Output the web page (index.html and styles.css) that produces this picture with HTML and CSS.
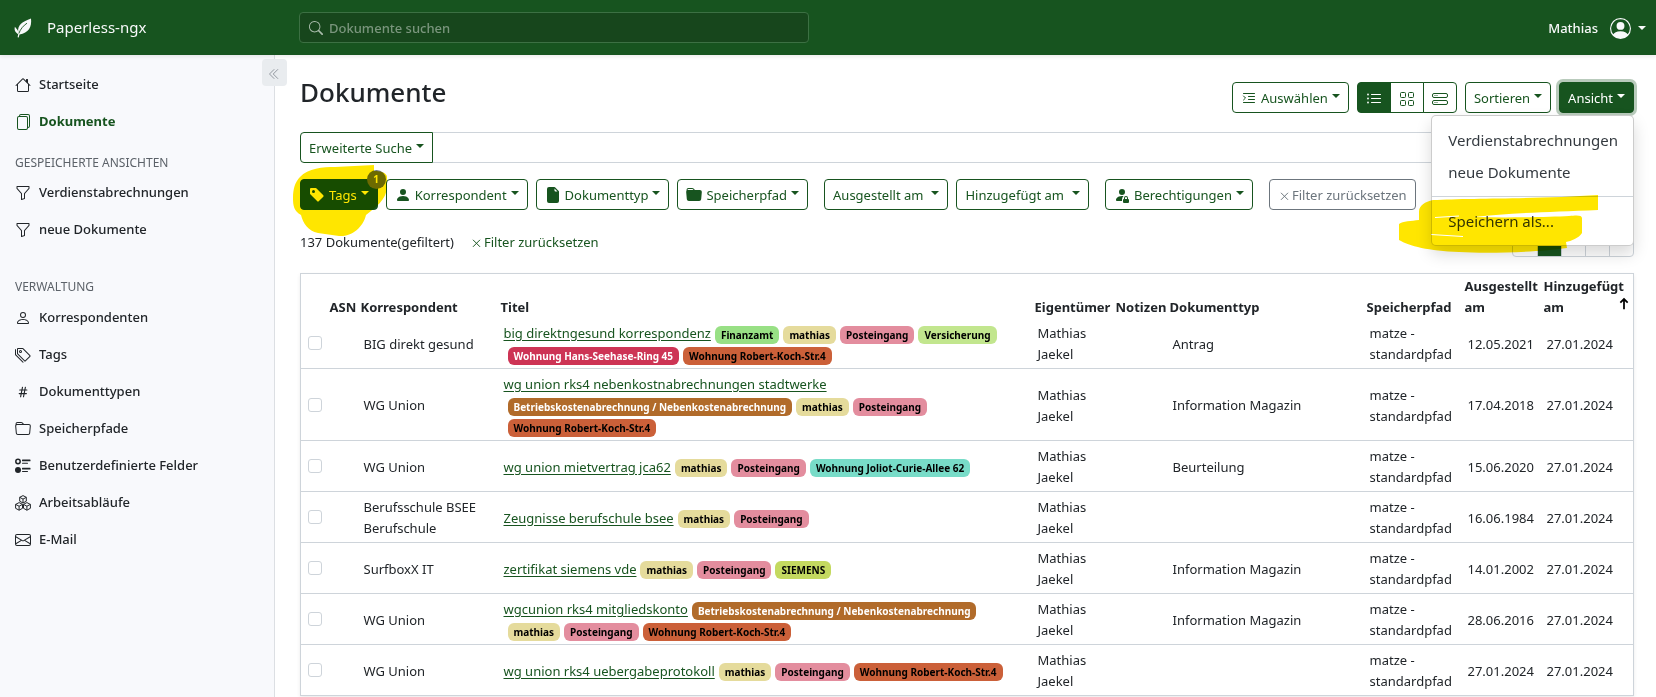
FILE: index.html
```html
<!DOCTYPE html>
<html lang="de">
<head>
<meta charset="utf-8">
<title>Dokumente - Paperless-ngx</title>
<link rel="stylesheet" href="styles.css">
</head>
<body>
<svg class="sprite" aria-hidden="true">
  <symbol id="i-house" viewBox="0 0 16 16"><path d="M8.707 1.5a1 1 0 0 0-1.414 0L.646 8.146a.5.5 0 0 0 .708.708L2 8.207V13.5A1.5 1.5 0 0 0 3.5 15h9a1.5 1.5 0 0 0 1.5-1.5V8.207l.646.647a.5.5 0 0 0 .708-.708L13 5.793V2.5a.5.5 0 0 0-.5-.5h-1a.5.5 0 0 0-.5.5v1.293zM13 7.207V13.5a.5.5 0 0 1-.5.5h-9a.5.5 0 0 1-.5-.5V7.207l5-5z"/></symbol>
  <symbol id="i-files" viewBox="0 0 16 16"><path d="M13 0H6a2 2 0 0 0-2 2 2 2 0 0 0-2 2v10a2 2 0 0 0 2 2h7a2 2 0 0 0 2-2 2 2 0 0 0 2-2V2a2 2 0 0 0-2-2m0 13V4a2 2 0 0 0-2-2H5a1 1 0 0 1 1-1h7a1 1 0 0 1 1 1v10a1 1 0 0 1-1 1M3 4a1 1 0 0 1 1-1h7a1 1 0 0 1 1 1v10a1 1 0 0 1-1 1H4a1 1 0 0 1-1-1z"/></symbol>
  <symbol id="i-funnel" viewBox="0 0 16 16"><path d="M1.5 1.5A.5.5 0 0 1 2 1h12a.5.5 0 0 1 .5.5v2a.5.5 0 0 1-.128.334L10 8.692V13.5a.5.5 0 0 1-.342.474l-3 1A.5.5 0 0 1 6 14.5V8.692L1.628 3.834A.5.5 0 0 1 1.5 3.5zm1 .5v1.308l4.372 4.858A.5.5 0 0 1 7 8.5v5.306l2-.666V8.5a.5.5 0 0 1 .128-.334L13.5 3.308V2z"/></symbol>
  <symbol id="i-person" viewBox="0 0 16 16"><path d="M8 8a3 3 0 1 0 0-6 3 3 0 0 0 0 6m2-3a2 2 0 1 1-4 0 2 2 0 0 1 4 0m4 8c0 1-1 1-1 1H3s-1 0-1-1 1-4 6-4 6 3 6 4m-1-.004c-.001-.246-.154-.986-.832-1.664C11.516 10.68 10.289 10 8 10s-3.516.68-4.168 1.332c-.678.678-.83 1.418-.832 1.664z"/></symbol>
  <symbol id="i-tags" viewBox="0 0 16 16"><path d="M3 2v4.586l7 7L14.586 9l-7-7zM2 2a1 1 0 0 1 1-1h4.586a1 1 0 0 1 .707.293l7 7a1 1 0 0 1 0 1.414l-4.586 4.586a1 1 0 0 1-1.414 0l-7-7A1 1 0 0 1 2 6.586z"/><path d="M5.5 5a.5.5 0 1 1 0-1 .5.5 0 0 1 0 1m0 1a1.5 1.5 0 1 0 0-3 1.5 1.5 0 0 0 0 3M1 7.086a1 1 0 0 0 .293.707L8.75 15.25l-.043.043a1 1 0 0 1-1.414 0l-7-7A1 1 0 0 1 0 7.586V3a1 1 0 0 1 1-1z"/></symbol>
  <symbol id="i-hash" viewBox="0 0 16 16"><path d="M7.5 3.2 5.6 12.8M10.4 3.2 8.5 12.8M4.7 6h7.2M4.2 9.6h7.2" fill="none" stroke="currentColor" stroke-width="1.1" stroke-linecap="round"/></symbol>
  <symbol id="i-folder" viewBox="0 0 16 16"><path d="M.54 3.87.5 3a2 2 0 0 1 2-2h3.672a2 2 0 0 1 1.414.586l.828.828A2 2 0 0 0 9.828 3h3.982a2 2 0 0 1 1.992 2.181l-.637 7A2 2 0 0 1 13.174 14H2.826a2 2 0 0 1-1.991-1.819l-.637-7a2 2 0 0 1 .342-1.31zM2.19 4a1 1 0 0 0-.996 1.09l.637 7a1 1 0 0 0 .995.91h10.348a1 1 0 0 0 .995-.91l.637-7A1 1 0 0 0 13.81 4zm4.69-1.707A1 1 0 0 0 6.172 2H2.5a1 1 0 0 0-1 .981l.006.139q.323-.119.684-.12h5.396z"/></symbol>
  <symbol id="i-radios" viewBox="0 0 16 16"><circle cx="3" cy="3.5" r="2.2" fill="none" stroke="currentColor" stroke-width="1.5"/><circle cx="3" cy="12" r="3"/><rect x="7" y="1.5" width="8.5" height="1.8" rx=".5"/><rect x="7" y="4.8" width="6" height="1" rx=".5"/><rect x="7" y="9.8" width="8.5" height="1.8" rx=".5"/><rect x="7" y="13" width="6" height="1" rx=".5"/></symbol>
  <symbol id="i-boxes" viewBox="0 0 16 16"><path d="M8 .6 11.3 2.3V6.2L8 8 4.7 6.2V2.3zM4.7 2.3 8 4.1l3.3-1.8M8 4.1V8M4.1 7.6l3.4 1.8v3.9l-3.4 1.9-3.5-1.9V9.4zM.6 9.4l3.5 1.8 3.4-1.8M4.1 11.2v4M11.9 7.6l3.5 1.8v3.9l-3.5 1.9-3.4-1.9V9.4zM8.5 9.4l3.4 1.8 3.5-1.8M11.9 11.2v4" fill="none" stroke="currentColor" stroke-width="1" stroke-linejoin="round"/></symbol>
  <symbol id="i-envelope" viewBox="0 0 16 16"><path d="M0 4a2 2 0 0 1 2-2h12a2 2 0 0 1 2 2v8a2 2 0 0 1-2 2H2a2 2 0 0 1-2-2zm2-1a1 1 0 0 0-1 1v.217l7 4.2 7-4.2V4a1 1 0 0 0-1-1zm13 2.383-4.708 2.825L15 11.105zm-.034 6.876-5.64-3.471L8 9.583l-1.326-.795-5.64 3.47A1 1 0 0 0 2 13h12a1 1 0 0 0 .966-.741M1 11.105l4.708-2.897L1 5.383z"/></symbol>
  <symbol id="i-collapse" viewBox="0 0 16 16"><path d="M8 2 2 8l6 6M13 2 7 8l6 6" fill="none" stroke="currentColor" stroke-width="1.2" stroke-linecap="round" stroke-linejoin="round"/></symbol>
  <symbol id="i-search" viewBox="0 0 16 16"><path d="M11.742 10.344a6.5 6.5 0 1 0-1.397 1.398h-.001q.044.06.098.115l3.85 3.85a1 1 0 0 0 1.415-1.414l-3.85-3.85a1 1 0 0 0-.115-.1zM12 6.5a5.5 5.5 0 1 1-11 0 5.5 5.5 0 0 1 11 0"/></symbol>
  <symbol id="i-tag-fill" viewBox="0 0 16 16"><path d="M2 1a1 1 0 0 0-1 1v4.586a1 1 0 0 0 .293.707l7 7a1 1 0 0 0 1.414 0l4.586-4.586a1 1 0 0 0 0-1.414l-7-7A1 1 0 0 0 6.586 1zm4 3.5a1.5 1.5 0 1 1-3 0 1.5 1.5 0 0 1 3 0"/></symbol>
  <symbol id="i-person-fill" viewBox="0 0 16 16"><path d="M3 14s-1 0-1-1 1-4 6-4 6 3 6 4-1 1-1 1zm5-6a3 3 0 1 0 0-6 3 3 0 0 0 0 6"/></symbol>
  <symbol id="i-file-fill" viewBox="0 0 16 16"><path d="M4 0h5.293A1 1 0 0 1 10 .293L13.707 4a1 1 0 0 1 .293.707V14a2 2 0 0 1-2 2H4a2 2 0 0 1-2-2V2a2 2 0 0 1 2-2m5.5 1.5v2a1 1 0 0 0 1 1h2z"/></symbol>
  <symbol id="i-folder-fill" viewBox="0 0 16 16"><path d="M9.828 3h3.982a2 2 0 0 1 1.992 2.181l-.637 7A2 2 0 0 1 13.174 14H2.825a2 2 0 0 1-1.991-1.819l-.637-7a2 2 0 0 1 .342-1.31L.5 3a2 2 0 0 1 2-2h3.672a2 2 0 0 1 1.414.586l.828.828A2 2 0 0 0 9.828 3m-8.322.12q.322-.119.684-.12h5.396l-.707-.707A1 1 0 0 0 6.172 2H2.5a1 1 0 0 0-1 .981z"/></symbol>
  <symbol id="i-person-lock" viewBox="0 0 16 16"><path d="M11 5a3 3 0 1 1-6 0 3 3 0 0 1 6 0m-9 8c0 1 1 1 1 1h5v-1a2 2 0 0 1 .01-.2 4.49 4.49 0 0 1 1.534-3.693Q8.844 9.002 8 9c-5 0-6 3-6 4m7 0a1 1 0 0 1 1-1v-1a2 2 0 1 1 4 0v1a1 1 0 0 1 1 1v2a1 1 0 0 1-1 1h-4a1 1 0 0 1-1-1zm3-3a1 1 0 0 0-1 1v1h2v-1a1 1 0 0 0-1-1"/></symbol>
  <symbol id="i-indent" viewBox="0 0 16 16"><path d="M2.5 3.5h11M7.5 6.5h6M7.5 9.5h6M2.5 12.5h11M2.5 6 4.500 8l-2 2" fill="none" stroke="currentColor" stroke-width="1" stroke-linecap="round" stroke-linejoin="round"/></symbol>
  <symbol id="i-list" viewBox="0 0 16 16"><path d="M5.500 3.500h9M5.500 7.500h9M5.500 11.500h9" fill="none" stroke="currentColor" stroke-width="1" stroke-linecap="round"/><circle cx="2" cy="3.500" r=".9"/><circle cx="2" cy="7.500" r=".9"/><circle cx="2" cy="11.500" r=".9"/></symbol>
  <symbol id="i-grid" viewBox="0 0 16 16"><path d="M1.500 2.500a1 1 0 0 1 1-1h3a1 1 0 0 1 1 1v3a1 1 0 0 1-1 1h-3a1 1 0 0 1-1-1zm8 0a1 1 0 0 1 1-1h3a1 1 0 0 1 1 1v3a1 1 0 0 1-1 1h-3a1 1 0 0 1-1-1zm-8 8a1 1 0 0 1 1-1h3a1 1 0 0 1 1 1v3a1 1 0 0 1-1 1h-3a1 1 0 0 1-1-1zm8 0a1 1 0 0 1 1-1h3a1 1 0 0 1 1 1v3a1 1 0 0 1-1 1h-3a1 1 0 0 1-1-1z" fill="none" stroke="currentColor" stroke-width="1"/></symbol>
  <symbol id="i-stack" viewBox="0 0 16 16"><rect x=".5" y="2.500" width="15" height="4" rx="1.500" fill="none" stroke="currentColor"/><rect x=".5" y="9.500" width="15" height="4" rx="1.500" fill="none" stroke="currentColor"/><circle cx="3" cy="4.500" r=".6"/><circle cx="5" cy="4.500" r=".6"/><circle cx="3" cy="11.500" r=".6"/><circle cx="5" cy="11.500" r=".6"/></symbol>
  <symbol id="i-user" viewBox="0 0 16 16"><path d="M11 6a3 3 0 1 1-6 0 3 3 0 0 1 6 0"/><path fill-rule="evenodd" d="M0 8a8 8 0 1 1 16 0A8 8 0 0 1 0 8m8-7a7 7 0 0 0-5.468 11.370C3.242 11.226 4.805 10 8 10s4.757 1.225 5.468 2.370A7 7 0 0 0 8 1"/></symbol>
  <symbol id="i-x" viewBox="0 0 16 16"><path d="m4 5 8 8M12 5l-8 8" fill="none" stroke="currentColor" stroke-width="1.200" stroke-linecap="round"/></symbol>
  <symbol id="i-up" viewBox="0 0 16 16"><path d="M8 14V2.500M3.800 6.500 8 2.300l4.200 4.200" fill="none" stroke="#000" stroke-width="2"/></symbol>
  <symbol id="i-leaf" viewBox="0 0 18 20"><path d="M17 .5C18 9 14.500 15 5.500 16.500L4.700 19.500 3.600 19.200 4.200 16.200C1.500 14.500 0 12.500.9 8.800 2.500 11 4.200 12 4.300 14.500 3.200 6.500 8.500 4 17 .5z"/><path d="M4.800 15.500C6.500 11 9.500 7.500 13 5.200" fill="none" stroke="#17541f" stroke-width=".9"/></symbol>
</svg>

<header class="topbar">
  <a class="brand" href="#"><svg class="leaf"><use href="#i-leaf"/></svg>Paperless-ngx</a>
  <form class="search">
    <svg class="icon"><use href="#i-search"/></svg>
    <input type="search" placeholder="Dokumente suchen" aria-label="Dokumente suchen">
  </form>
  <button class="user" type="button">Mathias<svg class="avatar"><use href="#i-user"/></svg><span class="caret"></span></button>
</header>

<div class="shell">
  <nav class="sidebar">
    <button class="collapse" type="button" aria-label="Seitenleiste einklappen"><svg class="icon"><use href="#i-collapse"/></svg></button>
    <a class="nav-link" href="#"><svg class="icon"><use href="#i-house"/></svg>Startseite</a>
    <a class="nav-link active" href="#"><svg class="icon"><use href="#i-files"/></svg>Dokumente</a>
    <h6 class="nav-head">Gespeicherte Ansichten</h6>
    <a class="nav-link" href="#"><svg class="icon"><use href="#i-funnel"/></svg>Verdienstabrechnungen</a>
    <a class="nav-link" href="#"><svg class="icon"><use href="#i-funnel"/></svg>neue Dokumente</a>
    <h6 class="nav-head nav-head-spaced">Verwaltung</h6>
    <a class="nav-link" href="#"><svg class="icon"><use href="#i-person"/></svg>Korrespondenten</a>
    <a class="nav-link" href="#"><svg class="icon"><use href="#i-tags"/></svg>Tags</a>
    <a class="nav-link" href="#"><svg class="icon"><use href="#i-hash"/></svg>Dokumenttypen</a>
    <a class="nav-link" href="#"><svg class="icon"><use href="#i-folder"/></svg>Speicherpfade</a>
    <a class="nav-link" href="#"><svg class="icon"><use href="#i-radios"/></svg>Benutzerdefinierte Felder</a>
    <a class="nav-link" href="#"><svg class="icon"><use href="#i-boxes"/></svg>Arbeitsabläufe</a>
    <a class="nav-link" href="#"><svg class="icon"><use href="#i-envelope"/></svg>E-Mail</a>
  </nav>

  <main class="main">
    <div class="page-head">
      <h1>Dokumente</h1>
      <div class="toolbar">
        <button class="btn" type="button"><svg class="icon"><use href="#i-indent"/></svg>Auswählen<span class="caret"></span></button>
        <div class="btn-group">
          <button class="btn solid" type="button" aria-label="Liste"><svg class="icon"><use href="#i-list"/></svg></button>
          <button class="btn" type="button" aria-label="Kacheln"><svg class="icon"><use href="#i-grid"/></svg></button>
          <button class="btn" type="button" aria-label="Details"><svg class="icon"><use href="#i-stack"/></svg></button>
        </div>
        <button class="btn" type="button">Sortieren<span class="caret"></span></button>
        <div class="dropdown">
          <button class="btn solid focus" type="button">Ansicht<span class="caret"></span></button>
          <div class="menu">
            <button type="button">Verdienstabrechnungen</button>
            <button type="button">neue Dokumente</button>
            <hr>
            <button type="button">Speichern als...</button>
          </div>
          <svg class="marker marker-menu" viewBox="0 0 200 60" aria-hidden="true"><path d="M20 25V17C20 10 26 7 34 5 70 3 140 4 199 0V15C150 17 110 18 75 22 110 23 150 22 170 21 178 20 183 20 183 23V38C180 43 172 46 167 47L168 53C140 57 90 59 60 57 30 56 10 51 0 45V29C4 26 12 26 20 25z"/><path class="streak" d="M32 39.500 64 41.500M36 22.500 60 21"/></svg>
        </div>
      </div>
    </div>

    <div class="query">
      <button class="btn" type="button">Erweiterte Suche<span class="caret"></span></button>
      <input type="text" aria-label="Erweiterte Suche">
    </div>

    <div class="filters">
      <div class="dropdown">
        <button class="btn solid" type="button"><svg class="icon"><use href="#i-tag-fill"/></svg>Tags<span class="caret"></span></button>
        <span class="count">1</span>
        <svg class="marker marker-tags" viewBox="0 0 96 72" aria-hidden="true"><path d="M7 12C15 3 30 2 42 2L81 0V6C88 6 94 8 94 12V22C94 34 82 43 73 50 70 63 58 72 46 71L25 68C15 66 10 58 8 50 1 46 0 41 0 33 0 24 2 17 7 12z"/></svg>
      </div>
      <button class="btn" type="button"><svg class="icon"><use href="#i-person-fill"/></svg>Korrespondent<span class="caret"></span></button>
      <button class="btn" type="button"><svg class="icon"><use href="#i-file-fill"/></svg>Dokumenttyp<span class="caret"></span></button>
      <button class="btn" type="button"><svg class="icon"><use href="#i-folder-fill"/></svg>Speicherpfad<span class="caret"></span></button>
      <button class="btn group-start wide" type="button">Ausgestellt am<span class="caret"></span></button>
      <button class="btn wide" type="button">Hinzugefügt am<span class="caret"></span></button>
      <button class="btn group-start" type="button"><svg class="icon"><use href="#i-person-lock"/></svg>Berechtigungen<span class="caret"></span></button>
      <button class="btn muted group-start" type="button"><svg class="icon-x"><use href="#i-x"/></svg>Filter zurücksetzen</button>
    </div>

    <div class="summary">
      <span>137 Dokumente(gefiltert)</span>
      <button class="link" type="button"><svg class="icon-x"><use href="#i-x"/></svg>Filter zurücksetzen</button>
      <nav class="pages" aria-label="Seiten"><a href="#">«</a><a class="current" href="#">1</a><a href="#">2</a><a href="#">3</a><a href="#">»</a></nav>
    </div>

    <table class="docs">
      <colgroup><col class="c-check"><col class="c-asn"><col class="c-corr"><col><col class="c-owner"><col class="c-notes"><col class="c-type"><col class="c-path"><col class="c-issued"><col class="c-added"></colgroup>
      <thead><tr><th></th><th>ASN</th><th>Korrespondent</th><th>Titel</th><th>Eigentümer</th><th>Notizen</th><th>Dokumenttyp</th><th>Speicherpfad</th><th>Ausgestellt<br>am</th><th>Hinzugefügt<span class="sorted">am<svg class="sort"><use href="#i-up"/></svg></span></th></tr></thead>
      <tbody>
        <tr><td><input type="checkbox" aria-label="big direktngesund korrespondenz"></td><td></td><td>BIG direkt gesund</td><td><a href="#">big direktngesund korrespondenz</a><span class="tag t-fin">Finanzamt</span><wbr><span class="tag t-mat">mathias</span><wbr><span class="tag t-post">Posteingang</span><wbr><span class="tag t-vers">Versicherung</span><wbr><span class="tag t-hans">Wohnung Hans-Seehase-Ring 45</span><wbr><span class="tag t-koch">Wohnung Robert-Koch-Str.4</span></td><td>Mathias Jaekel</td><td></td><td>Antrag</td><td>matze - standardpfad</td><td>12.05.2021</td><td>27.01.2024</td></tr>
        <tr><td><input type="checkbox" aria-label="wg union rks4 nebenkostnabrechnungen stadtwerke"></td><td></td><td>WG Union</td><td><a href="#">wg union rks4 nebenkostnabrechnungen stadtwerke</a><wbr><span class="tag t-betr">Betriebskostenabrechnung / Nebenkostenabrechnung</span><wbr><span class="tag t-mat">mathias</span><wbr><span class="tag t-post">Posteingang</span><wbr><span class="tag t-koch">Wohnung Robert-Koch-Str.4</span></td><td>Mathias Jaekel</td><td></td><td>Information Magazin</td><td>matze - standardpfad</td><td>17.04.2018</td><td>27.01.2024</td></tr>
        <tr><td><input type="checkbox" aria-label="wg union mietvertrag jca62"></td><td></td><td>WG Union</td><td><a href="#">wg union mietvertrag jca62</a><span class="tag t-mat">mathias</span><span class="tag t-post">Posteingang</span><span class="tag t-jol">Wohnung Joliot-Curie-Allee 62</span></td><td>Mathias Jaekel</td><td></td><td>Beurteilung</td><td>matze - standardpfad</td><td>15.06.2020</td><td>27.01.2024</td></tr>
        <tr><td><input type="checkbox" aria-label="Zeugnisse berufschule bsee"></td><td></td><td>Berufsschule BSEE Berufschule</td><td><a href="#">Zeugnisse berufschule bsee</a><span class="tag t-mat">mathias</span><span class="tag t-post">Posteingang</span></td><td>Mathias Jaekel</td><td></td><td></td><td>matze - standardpfad</td><td>16.06.1984</td><td>27.01.2024</td></tr>
        <tr><td><input type="checkbox" aria-label="zertifikat siemens vde"></td><td></td><td>SurfboxX IT</td><td><a href="#">zertifikat siemens vde</a><span class="tag t-mat">mathias</span><span class="tag t-post">Posteingang</span><span class="tag t-siem">SIEMENS</span></td><td>Mathias Jaekel</td><td></td><td>Information Magazin</td><td>matze - standardpfad</td><td>14.01.2002</td><td>27.01.2024</td></tr>
        <tr><td><input type="checkbox" aria-label="wgcunion rks4 mitgliedskonto"></td><td></td><td>WG Union</td><td><a href="#">wgcunion rks4 mitgliedskonto</a><span class="tag t-betr">Betriebskostenabrechnung / Nebenkostenabrechnung</span><wbr><span class="tag t-mat">mathias</span><wbr><span class="tag t-post">Posteingang</span><wbr><span class="tag t-koch">Wohnung Robert-Koch-Str.4</span></td><td>Mathias Jaekel</td><td></td><td>Information Magazin</td><td>matze - standardpfad</td><td>28.06.2016</td><td>27.01.2024</td></tr>
        <tr><td><input type="checkbox" aria-label="wg union rks4 uebergabeprotokoll"></td><td></td><td>WG Union</td><td><a href="#">wg union rks4 uebergabeprotokoll</a><span class="tag t-mat">mathias</span><span class="tag t-post">Posteingang</span><span class="tag t-koch">Wohnung Robert-Koch-Str.4</span></td><td>Mathias Jaekel</td><td></td><td></td><td>matze - standardpfad</td><td>27.01.2024</td><td>27.01.2024</td></tr>
      </tbody>
    </table>
  </main>
</div>
</body>
</html>
```
FILE: styles.css
```css
:root {
  --green: #17541f;
  --line: #ced4da;
  --text: #212529;
}
* { box-sizing: border-box; }
body {
  margin: 0;
  min-height: 100vh;
  display: flex;
  flex-direction: column;
  background: #fff;
  color: var(--text);
  font: 13px/21px "Noto Sans", "Open Sans", sans-serif;
}
button, input { font: inherit; color: inherit; }
button { cursor: pointer; }
a { color: inherit; text-decoration: none; }
svg { fill: currentColor; flex: none; }
.sprite { display: none; }
.icon { width: 16px; height: 16px; }
.caret {
  width: 0;
  height: 0;
  margin-bottom: 4px;
  border: 4px solid transparent;
  border-top-color: currentColor;
  border-bottom: 0;
}

/* Header */
.topbar {
  display: flex;
  align-items: center;
  height: 55px;
  padding-right: 10px;
  background: var(--green);
  color: #f8f9fa;
  box-shadow: 0 2px 4px rgba(0, 0, 0, .08);
  position: relative;
  z-index: 3;
}
.brand {
  display: flex;
  align-items: center;
  gap: 15px;
  width: 299px;
  padding-left: 14px;
  font-size: 15px;
}
.leaf { width: 18px; height: 20px; }
.search {
  display: flex;
  align-items: center;
  gap: 6px;
  width: 510px;
  height: 31px;
  padding: 0 9px;
  border: 1px solid #3c7043;
  border-radius: 4px;
  background: #17461c;
}
.search .icon { width: 14px; height: 14px; color: #a9bcab; }
.search input {
  flex: 1;
  min-width: 0;
  padding: 1px 0 0;
  border: 0;
  outline: 0;
  background: none;
}
.search input::placeholder { color: #7a957d; opacity: 1; font-weight: 500; }
.user {
  display: flex;
  align-items: center;
  margin-left: auto;
  padding: 1px 0 0;
  border: 0;
  background: none;
  font-weight: 500;
}
.avatar { width: 21px; height: 21px; margin: 0 7px 0 12px; }
.user .caret { margin-bottom: 0; }

/* Sidebar */
.shell { display: flex; flex: 1; }
.sidebar {
  position: relative;
  flex: none;
  width: 275px;
  padding-top: 11px;
  border-right: 1px solid #dcdfe3;
  background: #f8f9fc;
}
.collapse {
  position: absolute;
  top: 4px;
  right: -13px;
  display: grid;
  place-items: center;
  width: 25px;
  height: 27px;
  padding: 3px 2px 0 0;
  border: 0;
  border-radius: 4px;
  background: #e9ecef;
  color: #8a9097;
}
.collapse .icon { width: 12px; height: 12px; }
.nav-link {
  display: flex;
  align-items: center;
  gap: 8px;
  height: 37px;
  padding-left: 15px;
  font-weight: 500;
}
.nav-link.active { color: var(--green); font-weight: 700; }
.nav-head {
  margin: 0;
  padding: 13px 15px 1px;
  color: #5c6269;
  font-size: 12px;
  font-weight: 400;
  line-height: 20px;
  text-transform: uppercase;
}
.nav-head-spaced { padding-top: 29px; padding-bottom: 2px; }

/* Main area */
.main { flex: 1; min-width: 0; padding: 20px 22px 0 25px; }
.page-head {
  display: flex;
  justify-content: space-between;
  height: 57px;
}
h1 { margin: 0; font-size: 26px; font-weight: 500; line-height: 34px; }
.toolbar { display: flex; gap: 8px; padding-top: 7px; }
.btn {
  display: flex;
  align-items: center;
  justify-content: center;
  gap: 4px;
  height: 31px;
  padding: 1px 8px 0;
  border: 1px solid var(--green);
  border-radius: 4px;
  background: #fff;
  color: var(--green);
  white-space: nowrap;
}
.btn.solid { background: var(--green); color: #fff; }
.btn.focus { box-shadow: 0 0 0 3px #b9cbbc; }
.btn.muted { border-color: #6c757d; color: #6c757d; gap: 1px; }
.btn.wide { gap: 8px; }
.btn-group { display: flex; }
.btn-group .btn { width: 34px; margin-right: -1px; padding-top: 3px; border-radius: 0; }
.btn-group .btn:first-child { border-radius: 4px 0 0 4px; }
.btn-group .btn:last-child { margin-right: 0; border-radius: 0 4px 4px 0; }
.icon-x { width: 13px; height: 13px; }

.dropdown { position: relative; }
.menu {
  position: absolute;
  top: 33px;
  right: 0;
  z-index: 5;
  display: flex;
  flex-direction: column;
  padding: 8px 0;
  border: 1px solid rgba(0, 0, 0, .2);
  border-radius: 5px;
  background: #fff;
  box-shadow: 0 8px 16px rgba(0, 0, 0, .15);
}
.menu button {
  padding: 4px 15px 4px 16px;
  border: 0;
  background: none;
  color: #343a40;
  font-size: 15px;
  line-height: 24px;
  text-align: left;
  white-space: nowrap;
}
.menu hr { width: 100%; margin: 8px 0; border: 0; border-top: 1px solid var(--line); }

/* Highlighter strokes laid over the controls */
.marker {
  position: absolute;
  z-index: 6;
  fill: #ffe600;
  mix-blend-mode: multiply;
  pointer-events: none;
}
.marker-tags { top: -14px; left: -7px; width: 96px; height: 72px; }
.marker-menu { top: 113px; right: 35px; width: 200px; height: 60px; }
.streak { fill: none; stroke: #fff; stroke-width: 1; }

.query { display: flex; }
.query .btn { border-radius: 4px 0 0 4px; }
.query input {
  flex: 1;
  min-width: 0;
  border: 1px solid var(--line);
  border-left: 0;
  border-radius: 0 4px 4px 0;
}
.filters { display: flex; gap: 8px; padding-top: 16px; }
.group-start { margin-left: 8px; }
.count {
  position: absolute;
  top: -9px;
  right: -8px;
  width: 19px;
  height: 19px;
  border-radius: 10px;
  background: #6c757d;
  color: #fff;
  font-size: 10px;
  font-weight: 700;
  line-height: 19px;
  text-align: center;
}
.summary { display: flex; align-items: center; gap: 16px; height: 63px; padding-top: 2px; }
.link {
  display: flex;
  align-items: center;
  gap: 1px;
  padding: 0;
  border: 0;
  background: none;
  color: var(--green);
}
.pages {
  display: flex;
  align-self: flex-start;
  margin: 14px 0 0 auto;
  border: 1px solid var(--line);
  border-radius: 4px;
  color: #343a40;
}
.pages a { width: 24px; line-height: 29px; text-align: center; border-left: 1px solid var(--line); }
.pages a:first-child { border-left: 0; }
.pages .current { background: var(--green); color: #fff; font-weight: 700; }

/* Document table */
.docs {
  width: 100%;
  table-layout: fixed;
  border-collapse: collapse;
  border: 1px solid var(--line);
  box-shadow: 0 2px 4px rgba(0, 0, 0, .08);
}
.c-check { width: 29px; }
.c-asn { width: 31px; }
.c-corr { width: 140px; }
.c-owner { width: 81px; }
.c-notes { width: 54px; }
.c-type { width: 197px; }
.c-path { width: 98px; }
.c-issued { width: 79px; }
.c-added { width: 90px; }
.docs th { padding: 2px 0 0; text-align: left; vertical-align: bottom; white-space: nowrap; font-weight: 700; }
.docs td { padding: 5px 3px 3px; }
.docs td:first-child { padding: 4px 7px; }
.docs tbody tr { border-bottom: 1px solid var(--line); }
.docs a { color: var(--green); text-decoration: underline; text-underline-offset: 2px; }
.docs input {
  display: block;
  width: 14px;
  height: 14px;
  margin: 0;
  appearance: none;
  border: 1px solid var(--line);
  border-radius: 3px;
  background: #fff;
}
.sorted { display: flex; justify-content: space-between; padding-right: 2px; }
.sort { width: 14px; height: 14px; }
.tag {
  display: inline-block;
  height: 18px;
  margin-left: 4px;
  padding: 0 6px;
  border-radius: 6px;
  color: #000;
  font-size: 10px;
  font-weight: 700;
  line-height: 18px;
  white-space: nowrap;
  vertical-align: middle;
}
.t-fin { background: #98e085; }
.t-mat { background: #e5db9c; }
.t-post { background: #e38d9e; }
.t-vers { background: #c2e68e; }
.t-siem { background: #c4d960; }
.t-jol { background: #78dcc8; }
.t-koch { background: #cb6039; }
.t-hans { background: #cd3455; color: #fff; }
.t-betr { background: #b16b2a; color: #fff; }
```
